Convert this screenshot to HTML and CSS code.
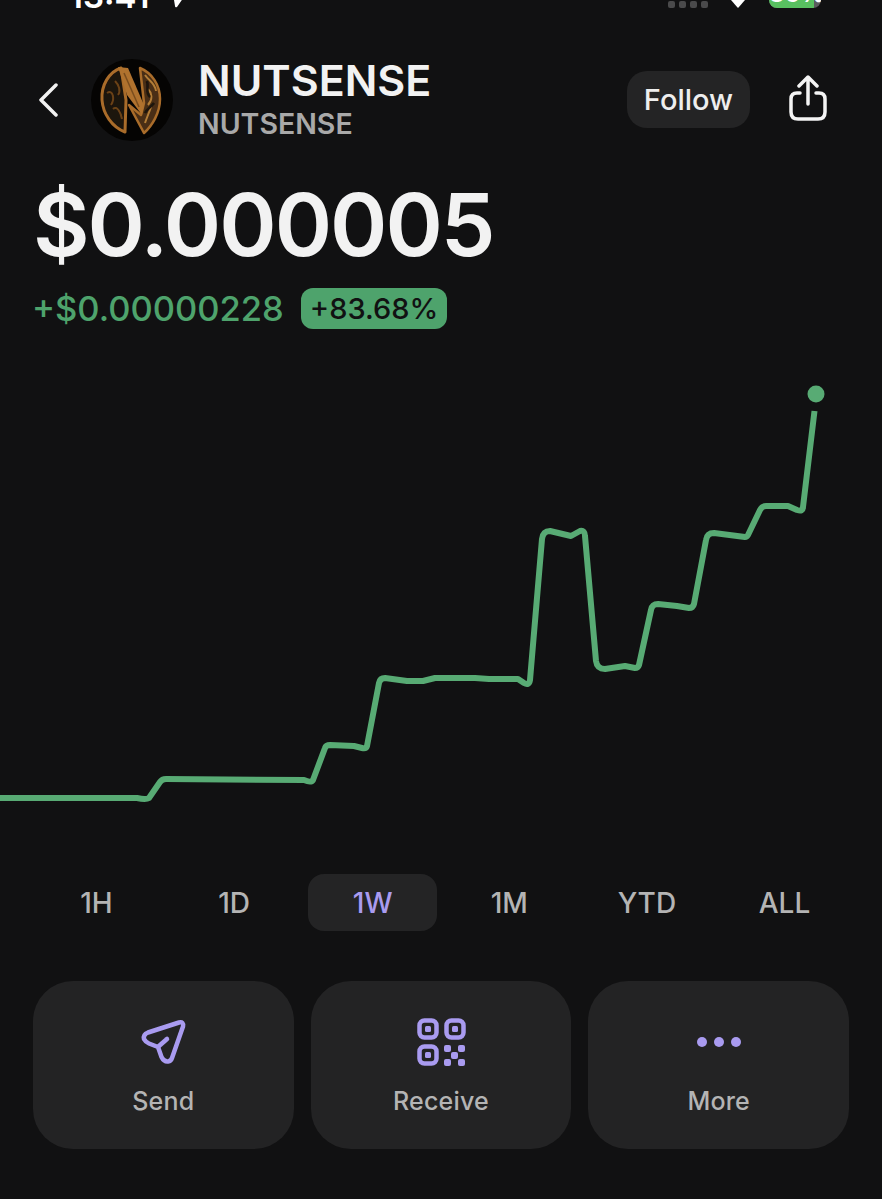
FILE: index.html
```html
<!DOCTYPE html>
<html lang="en">
<head>
    <meta charset="UTF-8">
    <meta name="viewport" content="width=device-width, initial-scale=1.0">
    <title>NUTSENSE</title>
    <link rel="stylesheet" href="styles.css">
</head>
<body>
    <!-- Status bar, cut off by the top of the picture -->
    <div class="statusbar">
        <div class="status-left">
            <span class="clock">13:41</span>
            <svg class="location" width="14" height="14" viewBox="0 0 14 14"><path d="M14 0L5 13Q3 14 3 12L2 6Z" fill="#fff"/></svg>
        </div>
        <div class="status-right">
            <div class="signal"><i></i><i></i><i></i><i></i></div>
            <svg class="wifi" width="16" height="8" viewBox="0 0 16 8"><path d="M1 0H15L8.500 7.500Q8 8 7.500 7.500Z" fill="#fff"/></svg>
            <div class="battery"><div class="battery-fill"></div><span class="battery-text">86%</span></div>
        </div>
    </div>

    <!-- Header -->
    <div class="header">
        <svg class="back" width="20" height="34" viewBox="0 0 20 34"><path d="M18 2L3 17L18 32" fill="none" stroke="#f2f2f2" stroke-width="3.500" stroke-linecap="round" stroke-linejoin="round"/></svg>
        <svg class="avatar" width="82" height="82" viewBox="0 0 82 82">
            <defs>
                <filter id="soft"><feGaussianBlur stdDeviation="0.6"/></filter>
            </defs>
            <circle cx="41" cy="41" r="41" fill="#050403"/>
            <g filter="url(#soft)">
                <path d="M30 9C18 13 10 26 11 41C12 55 21 68 34 73L35 41Z" fill="#1e1209" stroke="#a96c2a" stroke-width="3" stroke-linejoin="round"/>
                <path d="M49 9C61 14 69 26 69 40C69 54 61 67 53 74L38 46L50 56L53 44Z" fill="#4a2e12" stroke="#a96c2a" stroke-width="2.500" stroke-linejoin="round"/>
                <path d="M27 8L37 9L53 46L51 56L36 36Z" fill="#b0722e"/>
                <path d="M16 34C22 30 24 40 20 46M22 50C26 46 30 54 31 60M24 22C28 26 30 32 27 36" fill="none" stroke="#6b4319" stroke-width="2"/>
                <path d="M54 16C58 22 64 24 65 32M57 30C61 34 62 40 57 46M60 48C58 54 56 58 54 64" fill="none" stroke="#b27d38" stroke-width="2"/>
                <path d="M56 22C58 28 54 34 59 38M63 44C60 48 56 50 54 54" fill="none" stroke="#1d1208" stroke-width="2.500"/>
                <path d="M33 14L48 48" fill="none" stroke="#7a4d1e" stroke-width="1.500"/>
            </g>
        </svg>
        <div class="names">
            <div class="name">NUTSENSE</div>
            <div class="ticker">NUTSENSE</div>
        </div>
        <button class="follow">Follow</button>
        <svg class="share" width="38" height="46" viewBox="0 0 38 46" fill="none" stroke="#f4f4f4" stroke-width="3.500" stroke-linecap="round" stroke-linejoin="round">
            <path d="M11 18H8Q2 18 2 24V37Q2 44 9 44H29Q36 44 36 37V24Q36 18 30 18H27"/>
            <path d="M19 29V3M10 11L19 2L28 11"/>
        </svg>
    </div>

    <!-- Price -->
    <div class="price">$0.000005</div>
    <div class="change">
        <span class="change-value">+$0.00000228</span>
        <span class="change-badge">+83.68%</span>
    </div>

    <!-- Chart -->
    <svg class="chart" width="882" height="520" viewBox="0 340 882 520">
        <path d="M0 798H137Q146 800 149 798L160 782Q162 779 166 779L304 780Q311 783 313 780L325 748Q326 745 330 745L354 746L362 748Q366 749 367 746L379 683Q380 678 385 678L407 681H423L435 678H475L489 679H518L524 683Q529 686 530 680L542 539Q543 531 550 531L571 536L580 531Q585 530 585 536L596 661Q597 669 605 669L625 666L635 668Q638 668 639 665L651 610Q652 604 658 604L677 606L689 608Q693 608 694 604L706 540Q707 533 714 533L745 537Q747 537 748 535L760 510Q762 506 766 506H788L797 510Q803 512 803 507L814.500 411" fill="none" stroke="#58ab74" stroke-width="6" stroke-linejoin="round"/>
        <circle cx="816" cy="394" r="8.500" fill="#58ab74"/>
    </svg>

    <!-- Range tabs -->
    <div class="ranges">
        <div class="range">1H</div>
        <div class="range">1D</div>
        <div class="range active">1W</div>
        <div class="range">1M</div>
        <div class="range">YTD</div>
        <div class="range">ALL</div>
    </div>

    <!-- Actions -->
    <div class="actions">
        <div class="action">
            <svg class="icon-send" width="48" height="48" viewBox="0 0 48 48" fill="none" stroke="#a99bf0" stroke-width="4.500" stroke-linecap="round" stroke-linejoin="round">
                <path d="M39 3.500L8 13.500Q3 15.500 4 20Q5.500 23 9 24.500L18 28L21.500 38Q24 43 28 42.500Q31 42 32 39L43 7.500Q44 2.500 39 3.500Z"/>
                <path d="M19 27L27 20"/>
            </svg>
            <span class="action-label">Send</span>
        </div>
        <div class="action">
            <svg width="49" height="48" viewBox="0 0 49 48" fill="#a99bf0">
                <g fill="none" stroke="#a99bf0" stroke-width="4.500">
                    <rect x="2.500" y="2.500" width="17" height="17" rx="5"/>
                    <rect x="29.500" y="2.500" width="17" height="17" rx="5"/>
                    <rect x="2.500" y="28.500" width="17" height="17" rx="5"/>
                </g>
                <rect x="8" y="8" width="6" height="6" rx="1.500"/>
                <rect x="35" y="8" width="6" height="6" rx="1.500"/>
                <rect x="8" y="34" width="6" height="6" rx="1.500"/>
                <rect x="27" y="27" width="7" height="7" rx="2"/>
                <rect x="41" y="27" width="7" height="7" rx="2"/>
                <rect x="34" y="34" width="7" height="7" rx="2"/>
                <rect x="27" y="41" width="7" height="7" rx="2"/>
                <rect x="41" y="41" width="7" height="7" rx="2"/>
            </svg>
            <span class="action-label">Receive</span>
        </div>
        <div class="action">
            <svg width="48" height="48" viewBox="0 0 48 48" fill="#a99bf0">
                <circle cx="7" cy="24" r="5"/>
                <circle cx="24" cy="24" r="5"/>
                <circle cx="41" cy="24" r="5"/>
            </svg>
            <span class="action-label">More</span>
        </div>
    </div>
</body>
</html>
```

FILE: styles.css
```css
body {
    margin: 0;
    background-color: #111112;
    color: #f2f2f2;
    font-family: Inter, "Liberation Sans", sans-serif;
}

.statusbar {
    height: 8px;
    overflow: hidden;
    display: flex;
    justify-content: space-between;
    align-items: flex-end;
    padding: 0 61px 0 69px;
}

.status-left,
.status-right {
    display: flex;
    align-items: flex-end;
}

.clock {
    font-size: 33px;
    font-weight: 600;
    line-height: 36px;
    margin-bottom: -6px;
    color: #fff;
}

.location {
    margin-left: 23px;
}

.signal {
    display: flex;
    gap: 4px;
    margin-right: 22px;
}

.signal i {
    width: 7px;
    height: 7px;
    border-radius: 2px;
    background-color: #4a4a4b;
}

.wifi {
    margin-right: 23px;
}

.battery {
    position: relative;
    width: 52px;
    height: 24px;
    border-radius: 8px;
    background-color: #5c5c5e;
    overflow: hidden;
}

.battery-fill {
    width: 86%;
    height: 100%;
    background-color: #58c060;
}

.battery-text {
    position: absolute;
    left: 0;
    right: 0;
    bottom: 2px;
    text-align: center;
    font-size: 24px;
    line-height: 24px;
    font-weight: 700;
    color: #fff;
}

.header {
    display: flex;
    align-items: center;
    margin-top: 51px;
    padding: 0 55px 0 38px;
    height: 82px;
}

.back {
    margin-right: 33px;
}

.avatar {
    margin-right: 25px;
}

.name {
    font-size: 43px;
    font-weight: 600;
    line-height: 44px;
}

.ticker {
    margin-top: 4px;
    font-size: 28.500px;
    font-weight: 600;
    line-height: 36px;
    color: #a9a9a9;
}

.follow {
    margin-left: auto;
    margin-right: 39px;
    margin-bottom: 2px;
    width: 123px;
    height: 57px;
    border: none;
    border-radius: 20px;
    background-color: #242425;
    color: #eeeeee;
    font-family: inherit;
    font-size: 29px;
    font-weight: 500;
    padding: 0;
}

.share {
    margin-bottom: 4px;
}

.price {
    margin-top: 36px;
    padding-left: 33px;
    font-size: 87px;
    font-weight: 600;
    letter-spacing: -2px;
    line-height: 96px;
}

.change {
    display: flex;
    align-items: center;
    gap: 17px;
    margin-top: 15px;
    padding-left: 32px;
    height: 41px;
}

.change-value {
    font-size: 34.500px;
    font-weight: 500;
    color: #4ea36c;
}

.change-badge {
    display: flex;
    align-items: center;
    height: 41px;
    padding: 0 9px;
    border-radius: 12px;
    background-color: #4ea36c;
    color: #111112;
    font-size: 29px;
    font-weight: 500;
}

.chart {
    display: block;
    margin-top: 11px;
}

.ranges {
    display: grid;
    grid-template-columns: repeat(6, 129px);
    justify-content: space-between;
    margin: 14px 33px 0 32px;
}

.range {
    height: 57px;
    display: flex;
    align-items: center;
    justify-content: center;
    border-radius: 16px;
    font-size: 28px;
    font-weight: 500;
    color: #b4b4b4;
}

.range.active {
    background-color: #242425;
    color: #a99bf0;
    transform: translateX(1px);
}

.actions {
    display: flex;
    gap: 17px;
    margin: 50px 33px 50px;
}

.action {
    flex: 1;
    height: 168px;
    border-radius: 40px;
    background-color: #232324;
    display: flex;
    flex-direction: column;
    align-items: center;
    box-sizing: border-box;
    padding-top: 37px;
}

.icon-send {
    transform: translate(1px, 1px);
}

.action-label {
    margin-top: 20px;
    font-size: 25px;
    font-weight: 500;
    line-height: 30px;
    letter-spacing: 0.2px;
    color: #b4b4b4;
}
```
